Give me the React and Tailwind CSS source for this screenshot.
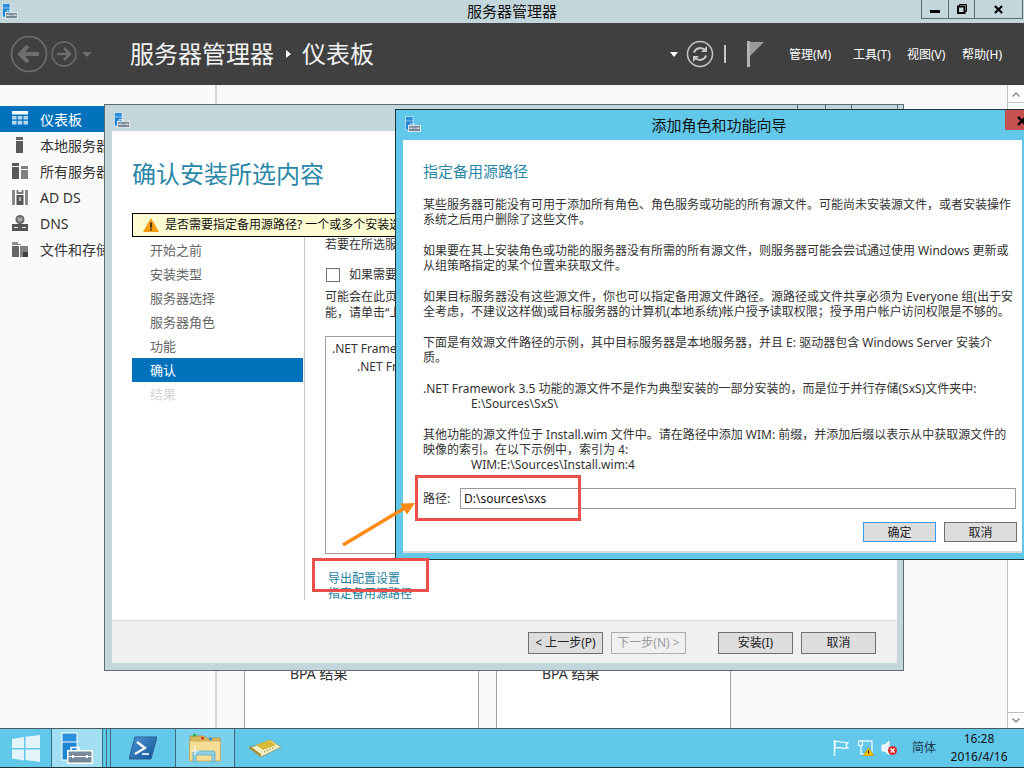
import React from 'react';

// server manager logo: blue tower with a toolbox over it
const ServerLogo = ({ className }) => (
  <svg viewBox="0 0 32 32" className={className}>
    <rect x="0.5" y="0.5" width="16" height="28" fill="#ffffff" />
    <rect x="1.5" y="1.5" width="14" height="8" fill="#2a8fdc" />
    <rect x="1.5" y="10.5" width="14" height="17" fill="#1f86d4" />
    <path d="M10 18v-2.5h8V18" fill="none" stroke="#ffffff" strokeWidth="1.5" />
    <rect x="6" y="18" width="26" height="14" fill="#ffffff" />
    <rect x="7.5" y="19.5" width="23" height="11" fill="#76899a" />
    <path d="M7.5 24.5h23" stroke="#ffffff" strokeWidth="1" />
    <rect x="11" y="23" width="2" height="3" fill="#ffffff" />
    <rect x="25" y="23" width="2" height="3" fill="#ffffff" />
  </svg>
);

const DashIcon = () => (
  <svg viewBox="0 0 16 16" className="w-4 h-4">
    <rect x="0" y="0" width="16" height="3.5" fill="#ffffff" />
    <path d="M0 5h4.5v3.5H0zM5.7 5h4.5v3.5H5.7zM11.5 5H16v3.5h-4.5zM0 9.8h4.5v3.8H0zM5.7 9.8h4.5v3.8H5.7zM11.5 9.8H16v3.8h-4.5z" fill="#b5d8ef" />
  </svg>
);

const LocalIcon = () => (
  <svg viewBox="0 0 16 16" className="w-4 h-4">
    <rect x="4" y="0" width="7" height="3" fill="#666666" />
    <rect x="4" y="4" width="7" height="12" fill="#595959" />
  </svg>
);

const AllIcon = () => (
  <svg viewBox="0 0 16 16" className="w-4 h-4">
    <rect x="0" y="0" width="7" height="3" fill="#595959" />
    <rect x="0" y="4" width="7" height="12" fill="#595959" />
    <rect x="9" y="3" width="7" height="3" fill="#808080" />
    <rect x="9" y="7" width="7" height="9" fill="#808080" />
  </svg>
);

const AdIcon = () => (
  <svg viewBox="0 0 16 16" className="w-4 h-4">
    <path d="M0 1h3v15H0zM13 1h3v15h-3z" fill="#8a8a8a" />
    <path d="M4.5 1h2v2h3V1h2v4h-7z" fill="#7a7a7a" />
    <rect x="4.5" y="6" width="7" height="10" fill="#555555" />
    <rect x="7.3" y="8" width="1.4" height="4" fill="#dddddd" />
  </svg>
);

const DnsIcon = () => (
  <svg viewBox="0 0 16 16" className="w-4 h-4">
    <circle cx="8" cy="4.5" r="4.5" fill="#666666" />
    <path d="M5 2l3 1 2-1 1 3-3 2-2-1z" fill="#a8a8a8" />
    <rect x="0" y="9" width="16" height="7" fill="#555555" />
    <path d="M2 12.5h4M10 12.5h4" stroke="#e5e5e5" strokeWidth="1" />
  </svg>
);

const FileIcon = () => (
  <svg viewBox="0 0 16 16" className="w-4 h-4">
    <path d="M0 1h6v2h3v1H0z" fill="#8a8a8a" />
    <path d="M0 5h7v11H0z" fill="#666666" />
    <path d="M8 5h8v11H8z" fill="#808080" />
    <path d="M11 11h5v5h-5z" fill="#404040" />
  </svg>
);

const sideItems = [
  { label: '本地服务器', icon: <LocalIcon /> },
  { label: '所有服务器', icon: <AllIcon /> },
  { label: 'AD DS', icon: <AdIcon /> },
  { label: 'DNS', icon: <DnsIcon /> },
  { label: '文件和存储', icon: <FileIcon /> },
];

const wizardSteps = ['开始之前', '安装类型', '服务器选择', '服务器角色', '功能'];

const Btn = ({ children, className = '' }) => (
  <div className={`w-[75px] h-[22px] shrink-0 flex items-center justify-center border border-[#707070] bg-[#dddddd] text-[12px] text-[#222222] ${className}`}>
    {children}
  </div>
);

const TaskButton = ({ children, className = '' }) => (
  <div className={`h-full shrink-0 flex items-center justify-center border-r border-[#3f6a7c] ${className}`}>{children}</div>
);

export default function App() {
  return (
    <div className="relative w-[1024px] h-[768px] overflow-hidden flex flex-col bg-white text-[#222222] [font-family:'Noto_Sans','Noto_Sans_CJK_SC',sans-serif]">
      {/* Title bar */}
      <div className="h-[23px] shrink-0 bg-[#c3d6dc] relative flex items-center justify-center">
        <ServerLogo className="absolute left-[2px] top-[3px] w-[16px] h-[16px]" />
        <span className="text-[15px] text-[#111111]">服务器管理器</span>
        <div className="absolute right-[1px] top-0 h-[19px] flex border-x border-b border-[#5d6b72]">
          <div className="w-[27px] flex items-center justify-center border-r border-[#5d6b72]">
            <div className="w-[10px] h-[3px] mt-[4px] bg-black" />
          </div>
          <div className="w-[26px] flex items-center justify-center border-r border-[#5d6b72]">
            <svg viewBox="0 0 10 10" className="w-[10px] h-[10px]">
              <path d="M2.5 2V0.5h7v7H8" fill="none" stroke="#000" strokeWidth="1" />
              <rect x="1" y="2.5" width="6.5" height="6.5" fill="none" stroke="#000" strokeWidth="2" />
            </svg>
          </div>
          <div className="w-[47px] flex items-center justify-center">
            <svg viewBox="0 0 10 10" className="w-[9px] h-[9px]">
              <path d="M1 1l8 8M9 1l-8 8" stroke="#000" strokeWidth="2.4" />
            </svg>
          </div>
        </div>
      </div>

      {/* Dark header */}
      <div className="h-[62px] shrink-0 bg-[#404040] flex items-center text-white">
        <svg viewBox="0 0 90 40" className="w-[90px] h-[40px] ml-[10px]">
          <circle cx="19" cy="20" r="17.5" fill="none" stroke="#6e6e6e" strokeWidth="1.6" />
          <path d="M10 20h19M18 12l-8 8 8 8" fill="none" stroke="#6e6e6e" strokeWidth="4" />
          <circle cx="54" cy="20" r="12" fill="none" stroke="#6e6e6e" strokeWidth="1.4" />
          <path d="M47 20h13M54 14l6 6-6 6" fill="none" stroke="#6e6e6e" strokeWidth="2.6" />
          <path d="M72 18h10l-5 5z" fill="#6e6e6e" />
        </svg>
        <span className="ml-[30px] text-[24px] text-[#f2f2f2]">服务器管理器</span>
        <svg viewBox="0 0 6 8" className="w-[6px] h-[8px] ml-[12px]"><path d="M0 0l5 4-5 4z" fill="#ffffff" /></svg>
        <span className="ml-[10px] text-[24px] text-[#f2f2f2]">仪表板</span>
        <svg viewBox="0 0 8 5" className="w-[8px] h-[5px] ml-[296px]"><path d="M0 0h8L4 5z" fill="#ffffff" /></svg>
        <svg viewBox="0 0 28 28" className="w-[28px] h-[28px] ml-[8px]">
          <circle cx="14" cy="14" r="12.5" fill="none" stroke="#c8c8c8" strokeWidth="1.5" />
          <path d="M8 12.5a6.3 6.3 0 0 1 11-2M20 15.5a6.3 6.3 0 0 1-11 2" fill="none" stroke="#c8c8c8" strokeWidth="2" />
          <path d="M21 6v6h-6zM7 22v-6h6z" fill="#c8c8c8" />
        </svg>
        <div className="w-[2px] h-[18px] bg-[#c8c8c8] ml-[10px]" />
        <svg viewBox="0 0 18 26" className="w-[18px] h-[26px] ml-[21px]">
          <rect x="0" y="0" width="3" height="26" fill="#b4b4b4" />
          <path d="M3 1h14l-14 14z" fill="#9a9a9a" />
        </svg>
        <div className="ml-[24px] mt-[2px] flex text-[12px] text-white">
          <span className="w-[64px]">管理(M)</span>
          <span className="w-[54px]">工具(T)</span>
          <span className="w-[55px]">视图(V)</span>
          <span>帮助(H)</span>
        </div>
      </div>

      {/* Page content */}
      <div className="flex-1 flex min-h-0">
        <div className="w-[217px] shrink-0 bg-[#fafafa] border-r-2 border-[#d4d4d4] pt-[21px]">
          <div className="h-[26px] flex items-center bg-[#0072bc] text-white">
            <div className="w-[40px] flex justify-center pl-[8px] pr-[8px]"><DashIcon /></div>
            <span className="text-[14px]">仪表板</span>
          </div>
          {sideItems.map((item) => (
            <div key={item.label} className="h-[26px] flex items-center text-[#333333]">
              <div className="w-[40px] flex justify-center pl-[8px] pr-[8px]">{item.icon}</div>
              <span className="text-[14px] whitespace-nowrap">{item.label}</span>
            </div>
          ))}
        </div>
        <div className="flex-1 bg-[#f8f8f8] flex items-end gap-[17px] pl-[27px]">
          {[0, 1].map((i) => (
            <div key={i} className="w-[235px] h-[70px] bg-white border-x border-[#a0a0a0] pl-[45px] pt-[5px] text-[14px] text-[#333333]">
              BPA 结果
            </div>
          ))}
        </div>
        <div className="w-[17px] shrink-0 border-l border-[#c0c0c0] bg-white flex flex-col justify-between">
          <div className="h-[17px] mt-[1px] flex items-center justify-center border-b border-[#c0c0c0]">
            <svg viewBox="0 0 8 5" className="w-[8px] h-[5px]"><path d="M0.5 4.5L4 1l3.5 3.5" fill="none" stroke="#777" strokeWidth="1.2" /></svg>
          </div>
          <div className="h-[16px] flex items-center justify-center border-t border-[#c0c0c0]">
            <svg viewBox="0 0 8 5" className="w-[8px] h-[5px]"><path d="M0.5 0.5L4 4l3.5-3.5" fill="none" stroke="#777" strokeWidth="1.2" /></svg>
          </div>
        </div>
      </div>

      {/* Taskbar */}
      <div className="h-[40px] shrink-0 bg-[#62c8ea] border-t border-[#4a5a62] border-b border-b-[#20323a] flex items-center">
        <TaskButton className="w-[52px]">
          <svg viewBox="0 0 28 27" className="w-[28px] h-[27px]">
            <path d="M0 4l12-2v11H0zM13.5 1.8L28 0v13H13.5zM0 14.5h12v11L0 23.5zM13.5 14.5H28V27l-14.5-2z" fill="#e3f5fb" />
          </svg>
        </TaskButton>
        <TaskButton className="w-[51px] bg-[#a2dff2]">
          <ServerLogo className="w-[32px] h-[32px]" />
        </TaskButton>
        <TaskButton className="w-[4px]" />
        <TaskButton className="w-[4px]" />
        <TaskButton className="w-[65px]">
          <svg viewBox="0 0 28 24" className="w-[28px] h-[24px]">
            <defs>
              <linearGradient id="psGrad" x1="0" y1="0" x2="1" y2="1">
                <stop offset="0" stopColor="#4f9ad6" />
                <stop offset="1" stopColor="#0f4f96" />
              </linearGradient>
            </defs>
            <path d="M6 1h22l-6 22H0z" fill="url(#psGrad)" stroke="#2d5f8c" strokeWidth="1" />
            <path d="M8 6l8 6-10 6" fill="none" stroke="#ffffff" strokeWidth="2.2" />
            <path d="M13 18h7" stroke="#ffffff" strokeWidth="1.6" />
          </svg>
        </TaskButton>
        <TaskButton className="w-[59px] bg-[#7ad1ee]">
          <svg viewBox="0 0 32 30" className="w-[32px] h-[30px]">
            <path d="M1 3h14l2 2h14v5H1z" fill="#d8b85e" stroke="#b08f3a" strokeWidth="0.8" />
            <rect x="4" y="1" width="3" height="2.5" fill="#28b34a" />
            <rect x="12" y="4" width="3" height="2.5" fill="#d04030" />
            <rect x="20" y="5" width="3" height="2.5" fill="#2a8fdc" />
            <path d="M0.5 8h31v20h-31z" fill="#f6dd95" stroke="#c9a64e" strokeWidth="0.8" />
            <path d="M4 29V20a2 2 0 0 1 2-2h18a2 2 0 0 1 2 2v9h-3v-7H7v7z" fill="#8fd0e6" stroke="#5aa8c4" strokeWidth="0.8" />
            <path d="M6 13v9M2 18h8" stroke="#ffffff" strokeWidth="1" />
          </svg>
        </TaskButton>
        <div className="w-[59px] shrink-0 flex items-center justify-center">
          <svg viewBox="0 0 32 18" className="w-[32px] h-[18px]">
            <path d="M0 9L22 1l10 7-20 10z" fill="#f5efc4" stroke="#8a7a34" strokeWidth="0.6" />
            <path d="M0 9l12 9v-3L1 7z" fill="#a89236" />
            <path d="M7 6L20 1l7 5-13 5z" fill="#d8b93c" />
            <path d="M15 13l11-5" stroke="#8a7a34" strokeWidth="1" strokeDasharray="1.5 1.5" />
          </svg>
        </div>
        <div className="ml-[539px] shrink-0 flex items-center">
          <svg viewBox="0 0 16 16" className="w-[16px] h-[16px]">
            <path d="M1.5 0v16" stroke="#ffffff" strokeWidth="1.4" />
            <path d="M2 1.5c4-1 5 1.5 13 1l-2 3 2 2.5c-7 1-9-1.5-13 0z" fill="#62c8ea" stroke="#ffffff" strokeWidth="1.2" />
          </svg>
          <svg viewBox="0 0 16 16" className="w-[16px] h-[16px] ml-[9px]">
            <rect x="3" y="1" width="11" height="13" fill="none" stroke="#ffffff" strokeWidth="1.2" />
            <rect x="0.5" y="1" width="4" height="4.5" fill="#62c8ea" stroke="#ffffff" strokeWidth="1.1" />
            <path d="M10.5 7.5L16 16H5z" fill="#f2c200" stroke="#7a6300" strokeWidth="0.4" />
            <path d="M10.5 10.5v3" stroke="#222222" strokeWidth="1.2" />
          </svg>
          <svg viewBox="0 0 16 16" className="w-[16px] h-[16px] ml-[7px]">
            <path d="M1 5h3l4-4v14l-4-4H1z" fill="#e8f4f8" stroke="#ffffff" strokeWidth="1" />
            <circle cx="11.5" cy="10.5" r="4.5" fill="#d92b2b" />
            <path d="M9.5 8.5l4 4M13.5 8.5l-4 4" stroke="#ffffff" strokeWidth="1.3" />
          </svg>
        </div>
        <span className="ml-[15px] shrink-0 text-[12px] text-[#1d3a50] whitespace-nowrap">简体</span>
        <div className="ml-[13px] w-[60px] shrink-0 flex flex-col items-center text-[12px] leading-[18px] text-[#111111] whitespace-nowrap">
          <span>16:28</span>
          <span>2016/4/16</span>
        </div>
      </div>

      {/* Wizard window behind */}
      <div className="absolute left-[104px] top-[104px] w-[800px] h-[567px] border border-[#5d6b72] bg-[#c3d6dc] flex flex-col">
        <div className="h-[26px] shrink-0 relative">
          <ServerLogo className="absolute left-[9px] top-[7px] w-[16px] h-[16px]" />
          <div className="absolute top-0 right-[5px] h-[5px] flex border-x border-[#5d6b72]">
            <div className="w-[28px] border-r border-[#5d6b72]" />
            <div className="w-[26px] border-r border-[#5d6b72]" />
            <div className="w-[45px]" />
          </div>
        </div>
        <div className="flex-1 min-h-0 ml-[7px] mr-[6px] mb-[7px] bg-white flex flex-col">
          <div className="h-[82px] shrink-0 pl-[20px] pt-[25px] text-[24px] leading-[36px] text-[#2a87a8]">确认安装所选内容</div>
          <div className="h-[24px] shrink-0 ml-[20px] w-[700px] border border-black bg-[#fdfbd0] flex items-center pl-[10px]">
            <svg viewBox="0 0 16 14" className="w-[16px] h-[14px]">
              <path d="M8 0l8 14H0z" fill="#f59a0c" />
              <path d="M8 4.5v5.2M8 10.8v1.7" stroke="#222222" strokeWidth="1.6" />
            </svg>
            <span className="ml-[6px] text-[12px] text-[#111111] whitespace-nowrap">是否需要指定备用源路径? 一个或多个安装选</span>
          </div>
          <div className="flex-1 min-h-0 flex pl-[20px]">
            <div className="w-[171px] shrink-0 pt-[1px] text-[13px] text-[#666666]">
              {wizardSteps.map((step) => (
                <div key={step} className="h-[24px] flex items-center pl-[18px] pt-[2px]">{step}</div>
              ))}
              <div className="h-[24px] flex items-center pl-[18px] pt-[2px] bg-[#0072bc] text-white">确认</div>
              <div className="h-[24px] flex items-center pl-[18px] pt-[2px] text-[#d4d4d4]">结果</div>
            </div>
            <div className="w-[1px] h-[363px] ml-[1px] bg-[#c8c8c8]" />
            <div className="flex-1 min-w-0 pl-[20px] pr-[16px] text-[12px] text-[#333333] whitespace-nowrap">
              <div className="h-[15px] leading-[15px]">若要在所选服</div>
              <div className="mt-[14px] h-[18px] flex items-center">
                <div className="w-[14px] h-[14px] ml-[1px] border border-[#707070]" />
                <span className="ml-[9px]">如果需要</span>
              </div>
              <div className="mt-[5px] leading-[16px]">可能会在此页</div>
              <div className="leading-[16px]">能，请单击“上</div>
              <div className="mt-[15px] h-[218px] border border-[#a0a0a0] pl-[6px] pt-[3px]">
                <div className="leading-[18px]">.NET Frame</div>
                <div className="leading-[18px] pl-[25px]">.NET Fr</div>
              </div>
              <div className="mt-[17px] pl-[3px] text-[#1b7ea0] leading-[15px]">导出配置设置</div>
              <div className="pl-[3px] text-[#1b7ea0] leading-[15px]">指定备用源路径</div>
            </div>
          </div>
          <div className="h-[43px] shrink-0 border-t border-[#dcdcdc] bg-[#f0f0f0] flex items-center pl-[416px] pt-[1px] mt-[20px]">
            <Btn>&lt; 上一步(P)</Btn>
            <Btn className="ml-[8px] !border-[#adadad] !bg-[#f0f0f0] !text-[#9a9a9a]">下一步(N) &gt;</Btn>
            <Btn className="ml-[32px]">安装(I)</Btn>
            <Btn className="ml-[8px]">取消</Btn>
          </div>
        </div>
      </div>

      {/* Alternate source dialog */}
      <div className="absolute left-[395px] top-[109px] w-[630px] h-[451px] border border-[#20323a] bg-[#62c8ea] flex flex-col">
        <div className="h-[30px] shrink-0 relative flex items-center justify-center text-[15px] text-[#111111] pl-[18px]">
          <ServerLogo className="absolute left-[9px] top-[6px] w-[16px] h-[16px]" />
          添加角色和功能向导
          <div className="absolute right-0 top-0 w-[19px] h-[20px] bg-[#c75050] overflow-hidden">
            <svg viewBox="0 0 10 10" className="absolute left-[12px] top-[6px] w-[10px] h-[10px]">
              <path d="M1 1l8 8M9 1l-8 8" stroke="#000" strokeWidth="2.4" />
            </svg>
          </div>
        </div>
        <div className="h-[413px] shrink-0 ml-[7px] mr-[2px] bg-white border-b-2 border-[#dcdcdc] pl-[20px] text-[12px] leading-[15px] text-[#333333] whitespace-nowrap">
          <div className="pt-[21px] text-[15px] leading-[20px] text-[#2a87a8]">指定备用源路径</div>
          <p className="mt-[16px]">某些服务器可能没有可用于添加所有角色、角色服务或功能的所有源文件。可能尚未安装源文件，或者安装操作<br />系统之后用户删除了这些文件。</p>
          <p className="mt-[16px]">如果要在其上安装角色或功能的服务器没有所需的所有源文件，则服务器可能会尝试通过使用 Windows 更新或<br />从组策略指定的某个位置来获取文件。</p>
          <p className="mt-[16px]">如果目标服务器没有这些源文件，你也可以指定备用源文件路径。源路径或文件共享必须为 Everyone 组(出于安<br />全考虑，不建议这样做)或目标服务器的计算机(本地系统)帐户授予读取权限；授予用户帐户访问权限是不够的。</p>
          <p className="mt-[16px]">下面是有效源文件路径的示例，其中目标服务器是本地服务器，并且 E: 驱动器包含 Windows Server 安装介<br />质。</p>
          <p className="mt-[16px]">.NET Framework 3.5 功能的源文件不是作为典型安装的一部分安装的，而是位于并行存储(SxS)文件夹中:</p>
          <p className="pl-[48px]">E:\Sources\SxS\</p>
          <p className="mt-[16px]">其他功能的源文件位于 Install.wim 文件中。请在路径中添加 WIM: 前缀，并添加后缀以表示从中获取源文件的<br />映像的索引。在以下示例中，索引为 4:</p>
          <p className="pl-[48px]">WIM:E:\Sources\Install.wim:4</p>
          <div className="mt-[16px] flex items-center h-[21px]">
            <span className="w-[37px]">路径:</span>
            <div className="w-[556px] h-[21px] border border-[#999999] flex items-center pl-[3px] text-[#111111]">D:\sources\sxs</div>
          </div>
          <div className="mt-[13px] flex justify-end pr-[5px] gap-[8px]">
            <div className="w-[73px] h-[20px] flex items-center justify-center border border-[#3399ff] bg-[#dddddd] text-[#222222]">确定</div>
            <div className="w-[73px] h-[20px] flex items-center justify-center border border-[#707070] bg-[#dddddd] text-[#222222]">取消</div>
          </div>
        </div>
      </div>

      {/* Annotations drawn over the screenshot */}
      <div className="absolute left-[312px] top-[558px] w-[117px] h-[34px] border-[3px] border-[#ea4f4a]" />
      <div className="absolute left-[415px] top-[475px] w-[166px] h-[46px] border-[3px] border-[#ea4f4a]" />
      <svg viewBox="0 0 80 50" className="absolute left-[340px] top-[498px] w-[80px] h-[50px]">
        <path d="M3 47L68 8" stroke="#ff8a14" strokeWidth="3.5" fill="none" />
        <path d="M75 5L60 5.5l7 11z" fill="#ff8a14" />
      </svg>
    </div>
  );
}
